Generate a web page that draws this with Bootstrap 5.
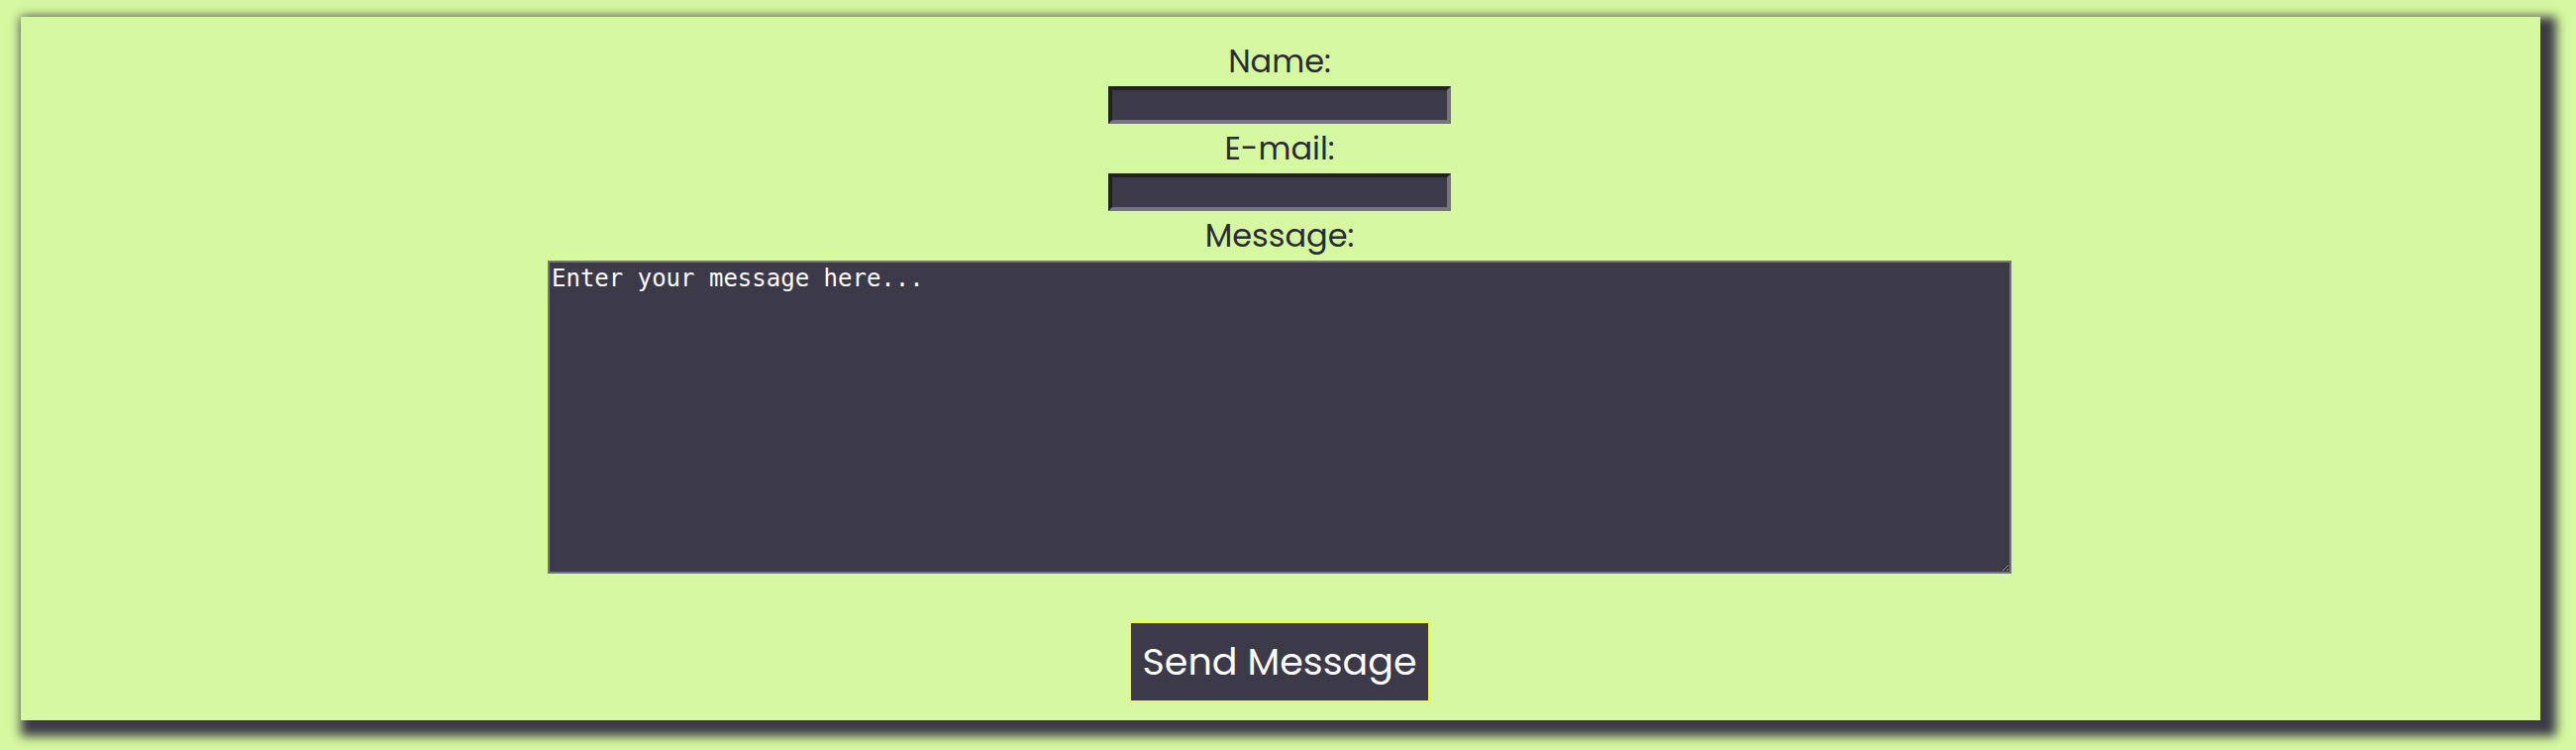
<!DOCTYPE html>
<html lang="en">
<head>
<meta charset="utf-8">
<meta name="viewport" content="width=device-width, initial-scale=1">
<title>Contact</title>
<link href="https://cdn.jsdelivr.net/npm/bootstrap@5.3.0/dist/css/bootstrap.min.css" rel="stylesheet">
<style>
:root { --lime: #d6f8a0; --ink: #3c3a48; }
body { background: var(--lime); color: #2a2a35; font-family: Poppins, "Open Sans", sans-serif; }
.contact-wrap { padding: 17px 36px 30px 21px; }
.contact-form { background: var(--lime); padding: 22px 22px 20px 20px; box-shadow: 8px 8px 10px 8px var(--ink); }
.contact-form label { font-size: 32px; line-height: 46px; margin-bottom: 2px; }
.field { width: 346px; max-width: 100%; height: 38px; margin-bottom: 2px; border: 4px inset #767676; background: var(--ink); color: #fff; }
.message { width: 1478px; max-width: 100%; height: 316px; margin-bottom: 50px; padding: 2px; border: 2px solid #767676; background: var(--ink); color: #fff; font: 24px/28px "DejaVu Sans Mono", monospace; }
.send { padding: 10px 12px; border: 0; box-shadow: 0 0 2px 1px #ff0; background: var(--ink); color: #fff; font-size: 38px; line-height: 58px; }
</style>
</head>
<body>
<main class="contact-wrap">
<form class="contact-form d-flex flex-column align-items-center">
<label for="name">Name:</label>
<input class="field" type="text" id="name">
<label for="email">E-mail:</label>
<input class="field" type="email" id="email">
<label for="message">Message:</label>
<textarea class="message" id="message">Enter your message here...</textarea>
<button class="send" type="submit">Send Message</button>
</form>
</main>
<script src="https://cdn.jsdelivr.net/npm/bootstrap@5.3.0/dist/js/bootstrap.bundle.min.js"></script>
</body>
</html>
